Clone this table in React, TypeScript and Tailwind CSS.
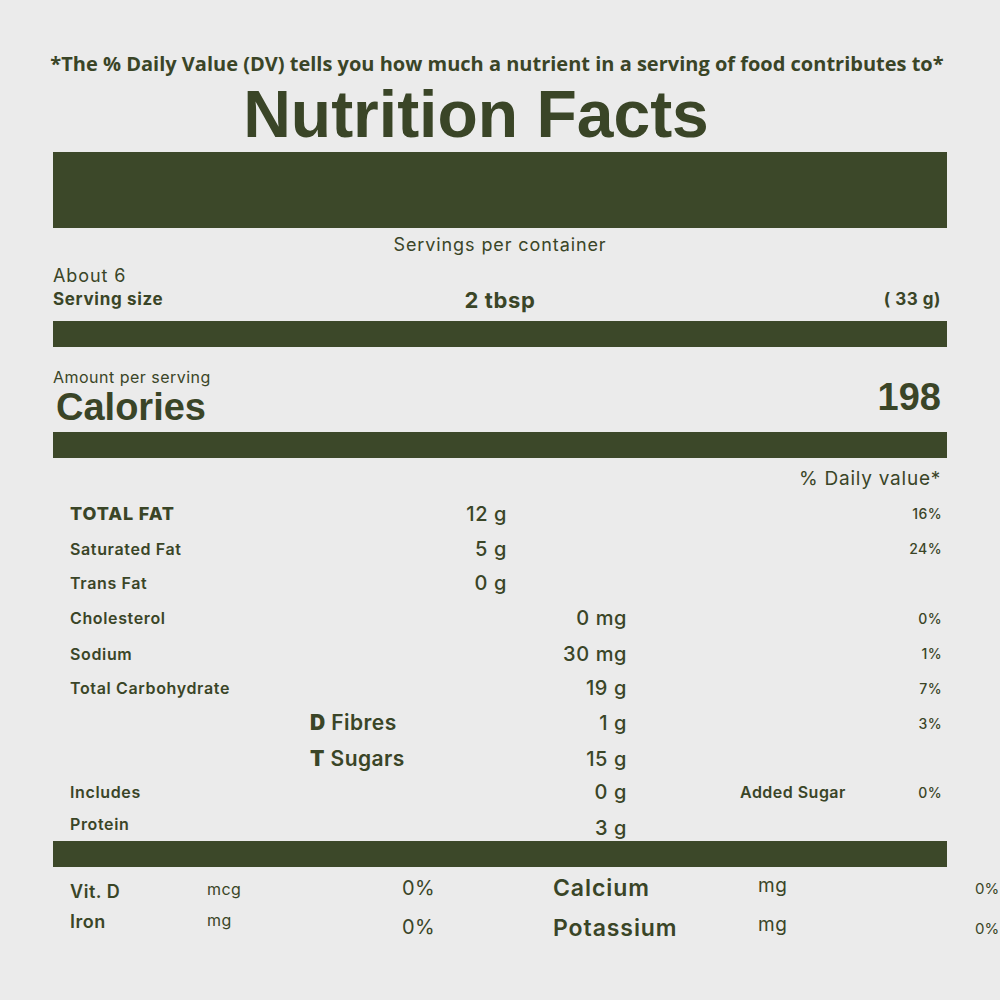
const green = 'text-[#3a4527]';

type Row = {
  label: string;
  indent?: string;
  fat?: string;
  value?: string;
  extra?: string;
  pct?: string;
  h: string;
  labelClass?: string;
  valueClass?: string;
};

const rows: Row[] = [
  { label: 'TOTAL FAT', fat: '12 g', pct: '16%', h: 'h-[35px]', labelClass: 'text-[18px] font-extrabold tracking-[0.05em]' },
  { label: 'Saturated Fat', fat: '5 g', pct: '24%', h: 'h-[35px]' },
  { label: 'Trans Fat', fat: '0 g', h: 'h-[34px]' },
  { label: 'Cholesterol', value: '0 mg', pct: '0%', h: 'h-[36px]' },
  { label: 'Sodium', value: '30 mg', pct: '1%', h: 'h-[35px]' },
  { label: 'Total Carbohydrate', value: '19 g', pct: '7%', h: 'h-[34px]' },
  { label: 'Fibres', indent: 'D', value: '1 g', pct: '3%', h: 'h-[36px]' },
  { label: 'Sugars', indent: 'T', value: '15 g', h: 'h-[36px]' },
  { label: 'Includes', value: '0 g', extra: 'Added Sugar', pct: '0%', h: 'h-[28px]' },
  { label: 'Protein', value: '3 g', h: 'h-[30px]', valueClass: 'pt-[8px]' },
];

function Bar({ h }: { h: string }) {
  return <div className={`${h} w-full bg-[#3c4829]`} />;
}

export default function App() {
  return (
    <div
      className={`w-[1000px] h-[1000px] overflow-hidden bg-[#ebebeb] ${green}`}
      style={{ fontFamily: 'Inter, "Liberation Sans", sans-serif' }}
    >
      <div className="pt-[52px] text-center">
        <p
          className="pr-[6px] text-[20px] font-bold leading-[24px]"
          style={{ fontFamily: '"Open Sans", sans-serif' }}
        >
          *The % Daily Value (DV) tells you how much a nutrient in a serving of food contributes to*
        </p>
        <h1
          className="mt-[8px] pr-[48px] text-[66px] font-bold leading-[60px]"
          style={{ fontFamily: '"Liberation Sans", Arial, sans-serif' }}
        >
          Nutrition Facts
        </h1>
      </div>

      <div className="mx-[53px] w-[894px] pt-[8px]">
        <Bar h="h-[76px]" />
        <p className="mt-[6px] text-center text-[18px] font-normal leading-[22px] tracking-[0.05em]">
          Servings per container
        </p>
        <p className="mt-[10px] text-[18px] font-normal leading-[20px] tracking-[0.05em]">About 6</p>
        <div className="grid grid-cols-3 items-center leading-[22px]">
          <span className="text-[17px] font-bold tracking-[0.04em]">Serving size</span>
          <span className="pt-[3px] text-center text-[22px] font-bold tracking-[0.03em]">2 tbsp</span>
          <span className="pr-[6px] text-right text-[17px] font-bold tracking-[0.03em]">( 33 g)</span>
        </div>
        <div className="mt-[10px]">
          <Bar h="h-[26px]" />
        </div>

        <p className="mt-[21px] text-[16px] leading-[18px] tracking-[0.03em]">Amount per serving</p>
        <div
          className="flex items-start justify-between pl-[3px] pr-[6px]"
          style={{ fontFamily: '"Liberation Sans", Arial, sans-serif' }}
        >
          <span className="text-[38px] font-bold leading-[42px]">Calories</span>
          <span className="-mt-[10px] text-[38px] font-bold leading-[42px]">198</span>
        </div>
        <div className="mt-[4px]">
          <Bar h="h-[26px]" />
        </div>

        <p className="mt-[9px] pr-[6px] text-right text-[19px] leading-[24px] tracking-[0.04em]">% Daily value*</p>

        <div className="mt-[5px] pl-[17px] pr-[5px]">
          {rows.map((r) => (
            <div
              key={r.label}
              className={`grid grid-cols-[330px_107px_120px_243px_72px] items-center ${r.h}`}
            >
              <span className={r.labelClass ?? 'whitespace-nowrap text-[16px] font-semibold tracking-[0.04em]'}>
                {r.indent ? (
                  <span className="block whitespace-nowrap pl-[240px] text-[21px] font-semibold tracking-[0.02em]">
                    <span className="font-black">{r.indent}</span> {r.label}
                  </span>
                ) : (
                  r.label
                )}
              </span>
              <span className="text-right text-[20px] font-medium tracking-[0.03em]">{r.fat}</span>
              <span className={`text-right text-[20px] font-medium tracking-[0.03em] ${r.valueClass ?? ''}`}>
                {r.value}
              </span>
              <span className="pl-[113px] text-[16px] font-semibold tracking-[0.03em]">{r.extra}</span>
              <span className="text-right text-[14px] font-medium tracking-[0.03em]">{r.pct}</span>
            </div>
          ))}
        </div>

        <div className="mt-[6px]">
          <Bar h="h-[26px]" />
        </div>

        <div className="pl-[17px]">
          <div className="grid h-[28px] grid-cols-[137px_195px_151px_205px_217px_60px] items-center">
            <span className="pt-[10px] text-[18px] font-semibold tracking-[0.03em]">Vit. D</span>
            <span className="pt-[6px] text-[16px] tracking-[0.03em]">mcg</span>
            <span className="pt-[4px] text-[20px] tracking-[0.02em]">0%</span>
            <span className="pt-[4px] text-[23px] font-semibold tracking-[0.04em]">Calcium</span>
            <span className="text-[19px] tracking-[0.03em]">mg</span>
            <span className="pt-[6px] text-[15px]">0%</span>
          </div>
          <div className="grid h-[46px] grid-cols-[137px_195px_151px_205px_217px_60px] items-center">
            <span className="pt-[2px] text-[18px] font-semibold tracking-[0.03em]">Iron</span>
            <span className="text-[16px] tracking-[0.03em]">mg</span>
            <span className="pt-[14px] text-[20px] tracking-[0.02em]">0%</span>
            <span className="pt-[16px] text-[23px] font-semibold tracking-[0.04em]">Potassium</span>
            <span className="pt-[10px] text-[19px] tracking-[0.03em]">mg</span>
            <span className="pt-[18px] text-[15px]">0%</span>
          </div>
        </div>
      </div>
    </div>
  );
}
